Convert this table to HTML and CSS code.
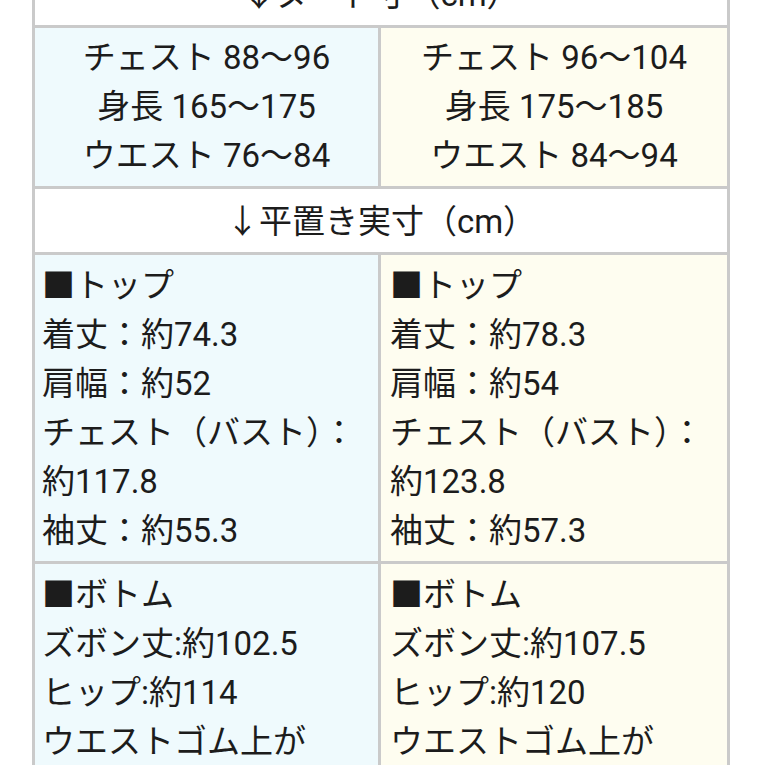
FILE: index.html
```html
<!DOCTYPE html>
<html lang="ja">
<head>
<meta charset="utf-8">
<title>サイズ表</title>
<link rel="stylesheet" href="styles.css">
</head>
<body>
<div class="sheet">
  <div class="cell full"><span class="arrow">↓</span>ヌード寸（cm）</div>

  <div class="cell size blue">
    <div>チェスト 88〜96</div>
    <div>身長 165〜175</div>
    <div>ウエスト 76〜84</div>
  </div>
  <div class="cell size yellow">
    <div>チェスト 96〜104</div>
    <div>身長 175〜185</div>
    <div>ウエスト 84〜94</div>
  </div>

  <div class="cell full"><span class="arrow">↓</span>平置き実寸（cm）</div>

  <div class="cell detail blue">
    <div>■トップ</div>
    <div>着丈：約74.3</div>
    <div>肩幅：約52</div>
    <div>チェスト（バスト）：<br>約117.8</div>
    <div>袖丈：約55.3</div>
  </div>
  <div class="cell detail yellow right">
    <div>■トップ</div>
    <div>着丈：約78.3</div>
    <div>肩幅：約54</div>
    <div>チェスト（バスト）：<br>約123.8</div>
    <div>袖丈：約57.3</div>
  </div>

  <div class="cell detail blue">
    <div>■ボトム</div>
    <div>ズボン丈:約102.5</div>
    <div>ヒップ:約114</div>
    <div>ウエストゴム上が</div>
  </div>
  <div class="cell detail yellow right">
    <div>■ボトム</div>
    <div>ズボン丈:約107.5</div>
    <div>ヒップ:約120</div>
    <div>ウエストゴム上が</div>
  </div>
</div>
</body>
</html>
```

FILE: styles.css
```css
html, body {
  margin: 0;
  padding: 0;
  background: #ffffff;
}

body {
  font-family: Roboto, "Noto Sans CJK JP", sans-serif;
  font-size: 33px;
  line-height: 49px;
  color: #1c1c1c;
  overflow: hidden;
}

.sheet {
  display: grid;
  grid-template-columns: 343px 346px;
  gap: 3px;
  padding: 3px;
  width: max-content;
  background: #cacaca;
  margin: -41px 0 0 32px;
}

.cell {
  white-space: nowrap;
}

.full {
  grid-column: 1 / -1;
  background: #ffffff;
  text-align: center;
  padding: 6px 0;
}

.arrow {
  font-family: "Noto Sans CJK JP", sans-serif;
}

.blue {
  background: #effafd;
}

.yellow {
  background: #fefdf0;
}

.size {
  text-align: center;
  padding: 5px 0 6px;
}

.detail {
  padding: 6px 7px;
}

.detail.right {
  padding: 6px 9px;
}
```
